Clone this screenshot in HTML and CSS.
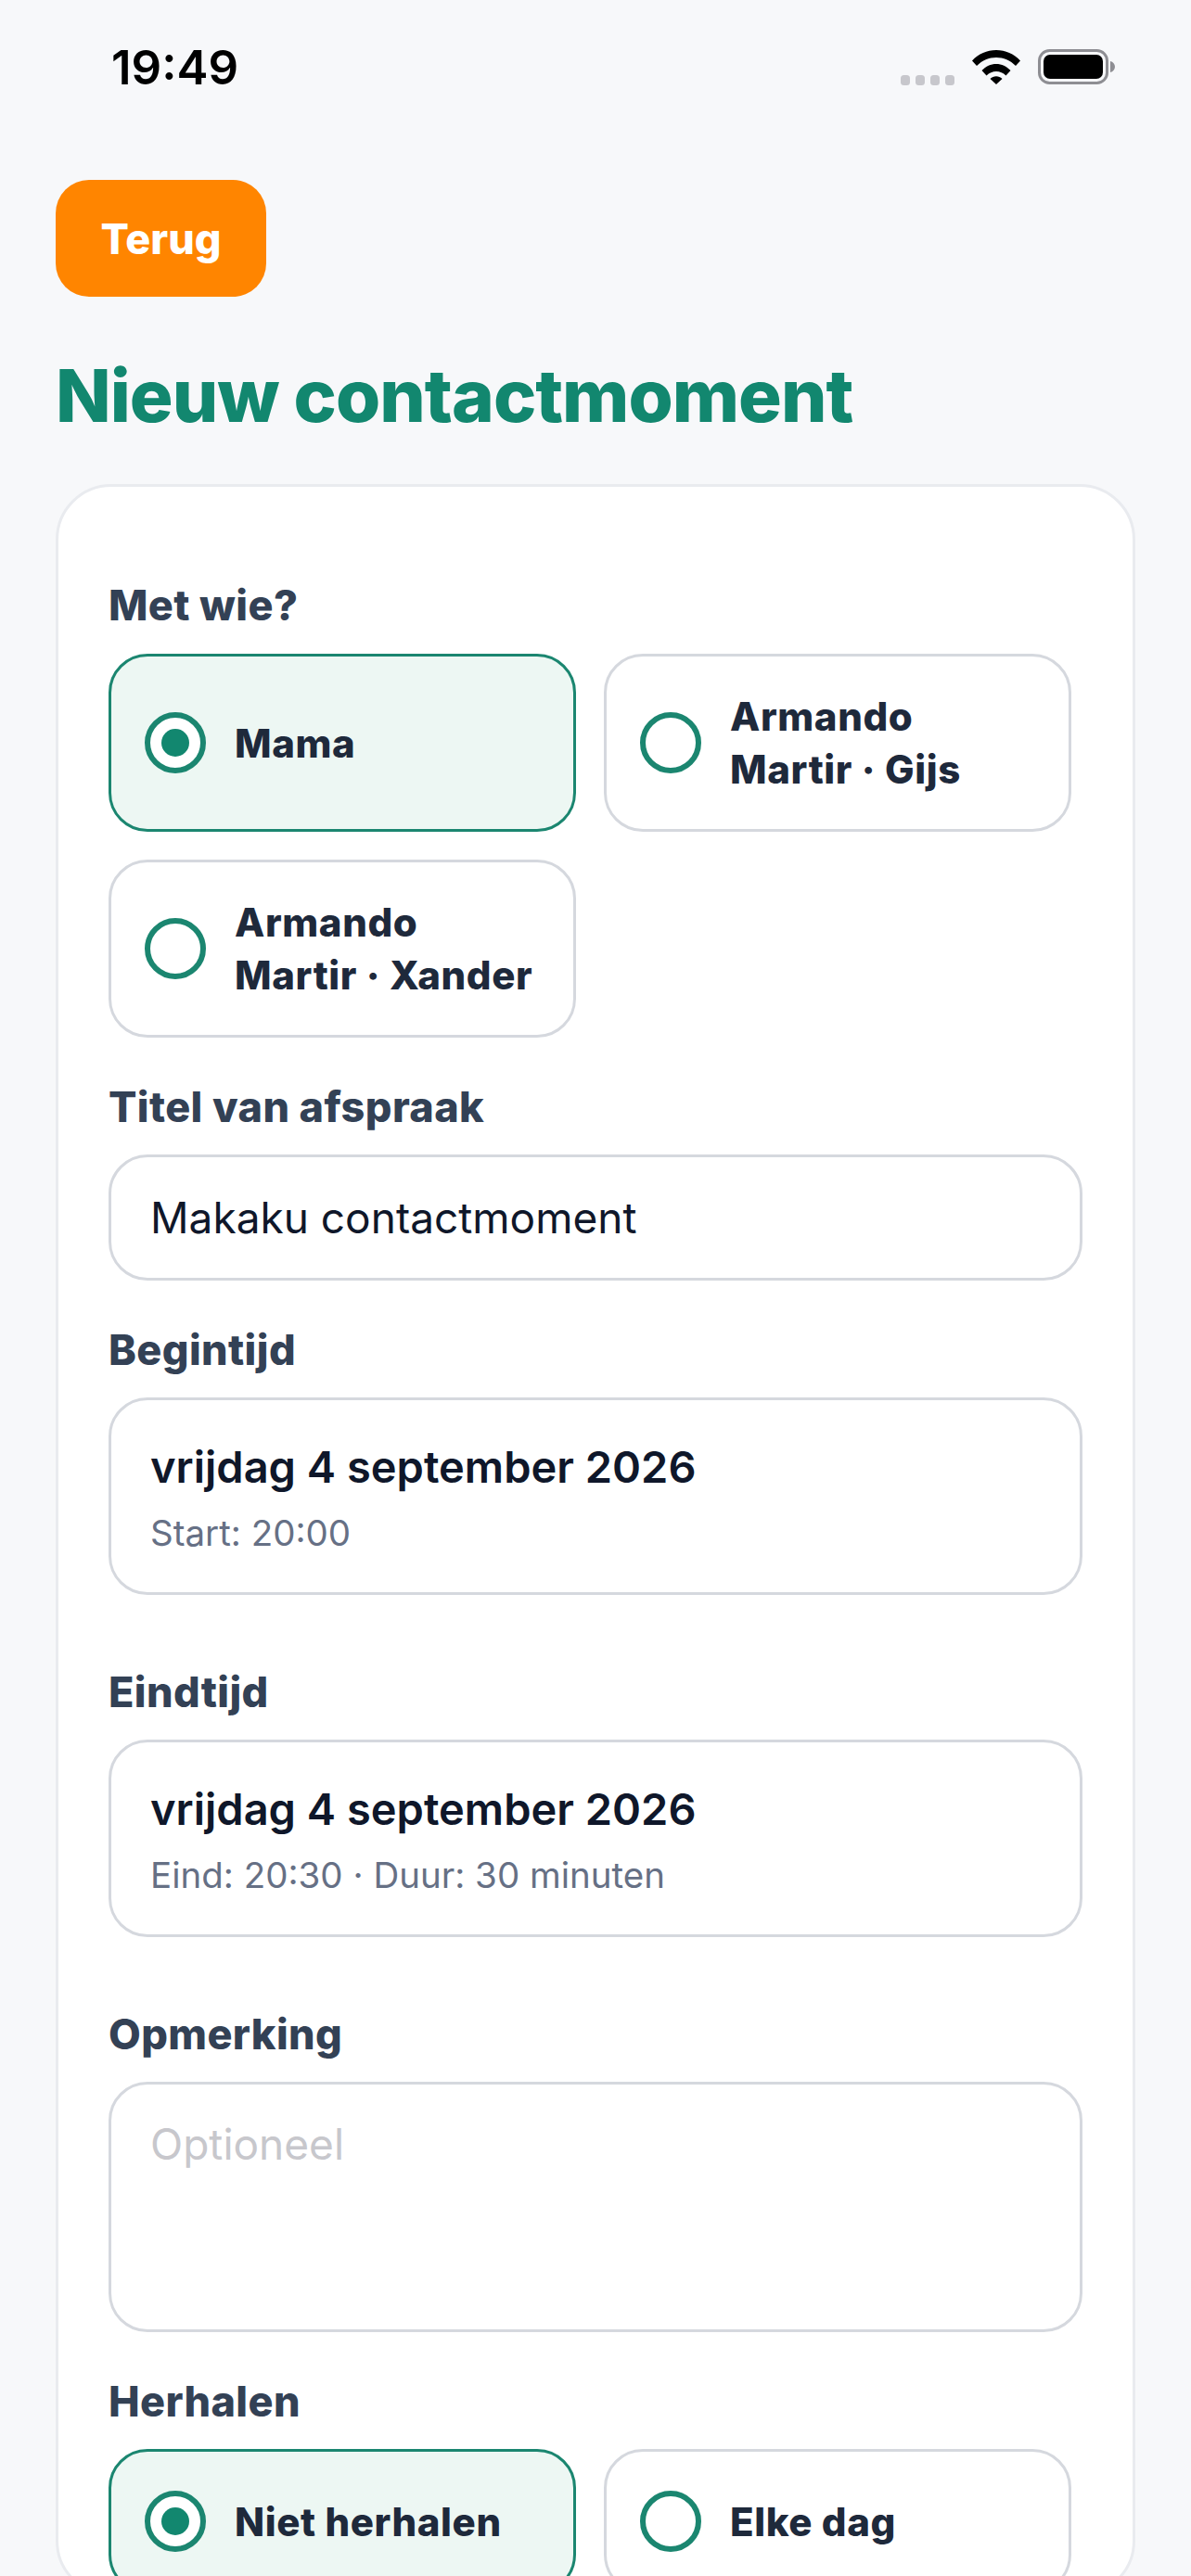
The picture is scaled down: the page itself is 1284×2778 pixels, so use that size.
FILE: index.html
```html
<!DOCTYPE html>
<html lang="nl">
<head>
    <meta charset="UTF-8">
    <meta name="viewport" content="width=device-width, initial-scale=1.0">
    <title>Nieuw contactmoment</title>
    <link rel="stylesheet" href="styles.css">
</head>
<body>
    <div class="status-bar">
        <span class="status-time">19:49</span>
        <div class="status-icons">
            <svg class="status-dots" width="60" height="12" viewBox="0 0 60 12">
                <rect x="0" y="0" width="10" height="11" rx="3.5"/>
                <rect x="16" y="0" width="10" height="11" rx="3.5"/>
                <rect x="32" y="0" width="10" height="11" rx="3.5"/>
                <rect x="48" y="0" width="10" height="11" rx="3.5"/>
            </svg>
            <svg class="status-wifi" width="52" height="38" viewBox="0 0 52 38">
                <path d="M0 12.500C7 5 16 1 26 1s19 4 26 11.500l-5 5.500C41 12 34 9 26 9S11 12 5 18z"/>
                <path d="M10.500 23C15 18.500 20 16 26 16s11 2.500 15.500 7l-5 5.500C33.500 25.500 30 24 26 24s-7.500 1.500-10.500 4.500z"/>
                <path d="M19.500 32c2-1.800 4-2.800 6.500-2.800s4.500 1 6.500 2.800L26 38z"/>
            </svg>
            <svg class="status-battery" width="84" height="40" viewBox="0 0 84 40">
                <rect x="1.500" y="1.500" width="73" height="35" rx="11" fill="none" stroke="#8e8e93" stroke-width="3"/>
                <rect x="6" y="6" width="64" height="26" rx="7" fill="#000"/>
                <path d="M78 13c3 .8 5 3 5 6s-2 5.200-5 6z" fill="#8e8e93"/>
            </svg>
        </div>
    </div>

    <div class="page">
        <button class="back-btn">Terug</button>
        <h1 class="page-title">Nieuw contactmoment</h1>

        <div class="card">
            <label class="field-label first">Met wie?</label>
            <div class="options">
                <div class="option selected">
                    <span class="radio"></span>
                    <span class="option-text">Mama</span>
                </div>
                <div class="option">
                    <span class="radio"></span>
                    <span class="option-text">Armando<br>Martir · Gijs</span>
                </div>
                <div class="option">
                    <span class="radio"></span>
                    <span class="option-text">Armando<br>Martir · Xander</span>
                </div>
            </div>

            <label class="field-label">Titel van afspraak</label>
            <div class="input">Makaku contactmoment</div>

            <label class="field-label">Begintijd</label>
            <div class="date-box">
                <div class="date-main">vrijdag 4 september 2026</div>
                <div class="date-sub">Start: 20:00</div>
            </div>

            <label class="field-label spaced">Eindtijd</label>
            <div class="date-box">
                <div class="date-main">vrijdag 4 september 2026</div>
                <div class="date-sub">Eind: 20:30 · Duur: 30 minuten</div>
            </div>

            <label class="field-label spaced">Opmerking</label>
            <div class="textarea">Optioneel</div>

            <label class="field-label">Herhalen</label>
            <div class="options">
                <div class="option selected">
                    <span class="radio"></span>
                    <span class="option-text">Niet herhalen</span>
                </div>
                <div class="option">
                    <span class="radio"></span>
                    <span class="option-text">Elke dag</span>
                </div>
            </div>
        </div>
    </div>
</body>
</html>
```

FILE: styles.css
```css
html, body {
    height: 2778px;
    overflow: hidden;
}
body {
    font-family: Inter, "Noto Sans", sans-serif;
    font-optical-sizing: none;
    background-color: #f7f8fa;
    margin: 0;
    padding: 0;
}
.status-bar {
    height: 144px;
    padding: 0 81px 0 120px;
    display: flex;
    align-items: flex-start;
    justify-content: space-between;
    box-sizing: border-box;
}
.status-time {
    font-size: 51px;
    font-weight: 600;
    line-height: 62px;
    margin-top: 42px;
    color: #000;
}
.status-icons {
    display: flex;
    align-items: flex-start;
    margin-top: 53px;
}
.status-dots {
    fill: #c7c7cc;
    margin-top: 28px;
    margin-right: 17px;
}
.status-wifi {
    margin-right: 19px;
}
.page {
    padding: 50px 60px 0;
}
.back-btn {
    display: block;
    width: 227px;
    height: 126px;
    border: none;
    border-radius: 36px;
    background-color: #ff8500;
    color: #fff;
    font-family: inherit;
    font-size: 45px;
    font-weight: 800;
    padding: 0;
}
.page-title {
    margin: 53px 0 41px;
    font-size: 78px;
    line-height: 108px;
    font-weight: 800;
    letter-spacing: -1px;
    color: #12876f;
}
.card {
    background-color: #fff;
    border: 3px solid #e9ebef;
    border-radius: 60px;
    padding: 101px 54px 0;
    width: 1164px;
    box-sizing: border-box;
}
.field-label {
    display: block;
    font-size: 45px;
    font-weight: 800;
    letter-spacing: 0.4px;
    line-height: 54px;
    color: #334155;
    margin: 48px 0 24px;
}
.field-label.first {
    margin-top: 0;
    margin-bottom: 25px;
}
.field-label.spaced {
    margin-top: 78px;
}
.options {
    display: flex;
    flex-wrap: wrap;
    gap: 30px;
    width: 1050px;
}
.option {
    width: 504px;
    min-height: 156px;
    box-sizing: border-box;
    border: 3px solid #d5d8de;
    border-radius: 42px;
    background-color: #fff;
    padding: 36px 30px 36px 36px;
    display: flex;
    align-items: center;
    gap: 31px;
}
.option.selected {
    background-color: #edf7f3;
    border-color: #1b8670;
}
.radio {
    flex: none;
    width: 66px;
    height: 66px;
    box-sizing: border-box;
    border: 6px solid #1b8670;
    border-radius: 50%;
    background-color: #fff;
    display: flex;
    align-items: center;
    justify-content: center;
}
.selected .radio::after {
    content: "";
    width: 30px;
    height: 30px;
    border-radius: 50%;
    background-color: #12876f;
}
.option-text {
    font-size: 42px;
    font-weight: 800;
    letter-spacing: 0.6px;
    line-height: 57px;
    color: #1e293b;
}
.input, .date-box, .textarea {
    width: 1050px;
    box-sizing: border-box;
    border: 3px solid #d5d8de;
    border-radius: 42px;
    background-color: #fff;
    padding: 0 42px;
    color: #0f172a;
    font-size: 46px;
}
.input {
    height: 136px;
    line-height: 130px;
}
.date-box {
    height: 213px;
    padding-top: 39px;
}
.date-main {
    font-size: 47px;
    font-weight: 600;
    line-height: 66px;
}
.date-sub {
    font-size: 38.500px;
    line-height: 54px;
    margin-top: 11px;
    color: #667085;
}
.textarea {
    height: 270px;
    padding-top: 34px;
    line-height: 60px;
    color: #c7c7cc;
}
```
